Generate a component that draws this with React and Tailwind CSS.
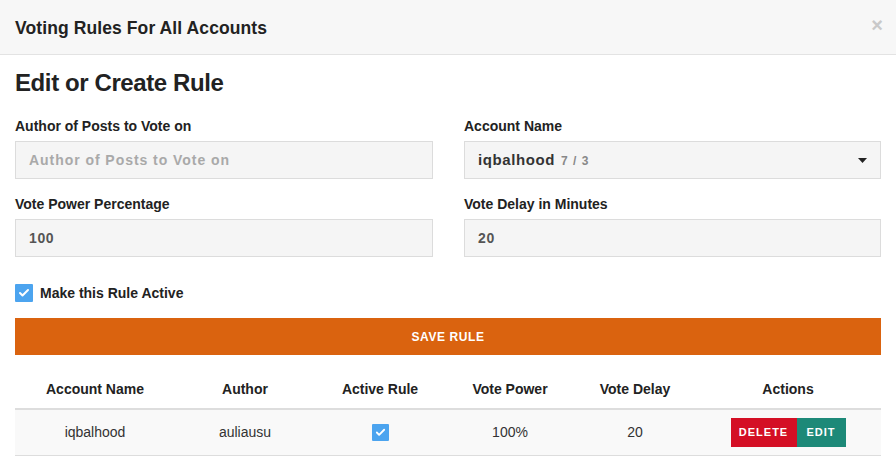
import { Check } from 'lucide-react';

const font = { fontFamily: '"Liberation Sans", Arial, sans-serif' };

const CheckBox = ({ size = 18 }) => (
  <span
    className="flex items-center justify-center bg-[#4ca4ef] rounded-[1px]"
    style={{ width: size, height: size }}
  >
    <Check size={size - 6} strokeWidth={4} className="text-white" />
  </span>
);

const Field = ({ label, children }) => (
  <div className="flex flex-col">
    <label className="text-[14px] leading-[20px] font-bold text-[#222] mb-[5px]">{label}</label>
    {children}
  </div>
);

const inputBox =
  'h-[38px] bg-[#f5f5f5] border border-[#dcdcdc] pl-[13px] pr-[15px] flex items-center text-[14px] font-bold';

export default function App() {
  const columns = [
    { label: 'Account Name', w: 'w-[160px]' },
    { label: 'Author', w: 'w-[140px]' },
    { label: 'Active Rule', w: 'w-[130px]' },
    { label: 'Vote Power', w: 'w-[130px]' },
    { label: 'Vote Delay', w: 'w-[120px]' },
    { label: 'Actions', w: 'w-[186px]' },
  ];

  return (
    <div className="w-[896px] h-[457px] bg-white overflow-hidden" style={font}>
      {/* modal header */}
      <div className="h-[55px] bg-[#f7f7f7] border-b border-[#e3e3e3] px-[15px] flex items-center justify-between">
        <h4 className="text-[17.5px] font-bold text-[#222] tracking-[0.1px] mt-[2px]">Voting Rules For All Accounts</h4>
        <span className="text-[20px] leading-none font-bold text-[#c9c9c9] mr-[-2px] mt-[-4px]">×</span>
      </div>

      <div className="px-[15px]">
        <h3 className="mt-[13px] text-[24px] leading-[30px] font-bold text-[#222] tracking-[-0.4px]">Edit or Create Rule</h3>

        <div className="grid grid-cols-[418px_417px] gap-x-[31px] gap-y-[15px] mt-[18px]">
          <Field label="Author of Posts to Vote on">
            <div className={inputBox + ' text-[#a9a9a9] tracking-[0.95px]'}>Author of Posts to Vote on</div>
          </Field>
          <Field label="Account Name">
            <div className={inputBox + ' justify-between text-[#333]'}>
              <span className="flex items-baseline gap-[6px]">
                <span className="text-[15px] tracking-[0.6px]">iqbalhood</span>
                <span className="text-[12px] text-[#888] tracking-[1px]">7 / 3</span>
              </span>
              <svg width="9" height="5" viewBox="0 0 9 5" className="mr-[-2px]">
                <path d="M0 0 L9 0 L4.5 5 Z" fill="#222" />
              </svg>
            </div>
          </Field>
          <Field label="Vote Power Percentage">
            <div className={inputBox + ' text-[#555] tracking-[0.6px]'}>100</div>
          </Field>
          <Field label="Vote Delay in Minutes">
            <div className={inputBox + ' text-[#555] tracking-[0.6px]'}>20</div>
          </Field>
        </div>

        <div className="mt-[26px] h-[20px] flex items-center gap-[7px]">
          <CheckBox size={18} />
          <span className="text-[14px] font-bold text-[#222]">Make this Rule Active</span>
        </div>

        <button className="mt-[15px] w-full h-[37px] bg-[#da630f] text-white text-[12px] font-bold tracking-[0.6px] flex items-center justify-center">
          SAVE RULE
        </button>

        <table className="mt-[15px] w-full table-fixed border-collapse">
          <thead>
            <tr className="h-[39px] border-b-2 border-[#dddddd]">
              {columns.map((c) => (
                <th key={c.label} className={`${c.w} text-center text-[14px] font-bold text-[#222] pt-[1px]`}>
                  {c.label}
                </th>
              ))}
            </tr>
          </thead>
          <tbody>
            <tr className="h-[46px] bg-[#f9f9f9] border-b border-[#dddddd] text-[14px] text-[#333]">
              <td className="text-center">iqbalhood</td>
              <td className="text-center">auliausu</td>
              <td>
                <div className="flex justify-center">
                  <CheckBox size={17} />
                </div>
              </td>
              <td className="text-center">100%</td>
              <td className="text-center">20</td>
              <td>
                <div className="flex justify-center">
                  <button className="h-[29px] w-[66px] bg-[#d40f25] text-white text-[11px] font-bold tracking-[1px]">
                    DELETE
                  </button>
                  <button className="h-[29px] w-[49px] bg-[#1d8978] text-white text-[11px] font-bold tracking-[1px]">
                    EDIT
                  </button>
                </div>
              </td>
            </tr>
          </tbody>
        </table>
      </div>
    </div>
  );
}
